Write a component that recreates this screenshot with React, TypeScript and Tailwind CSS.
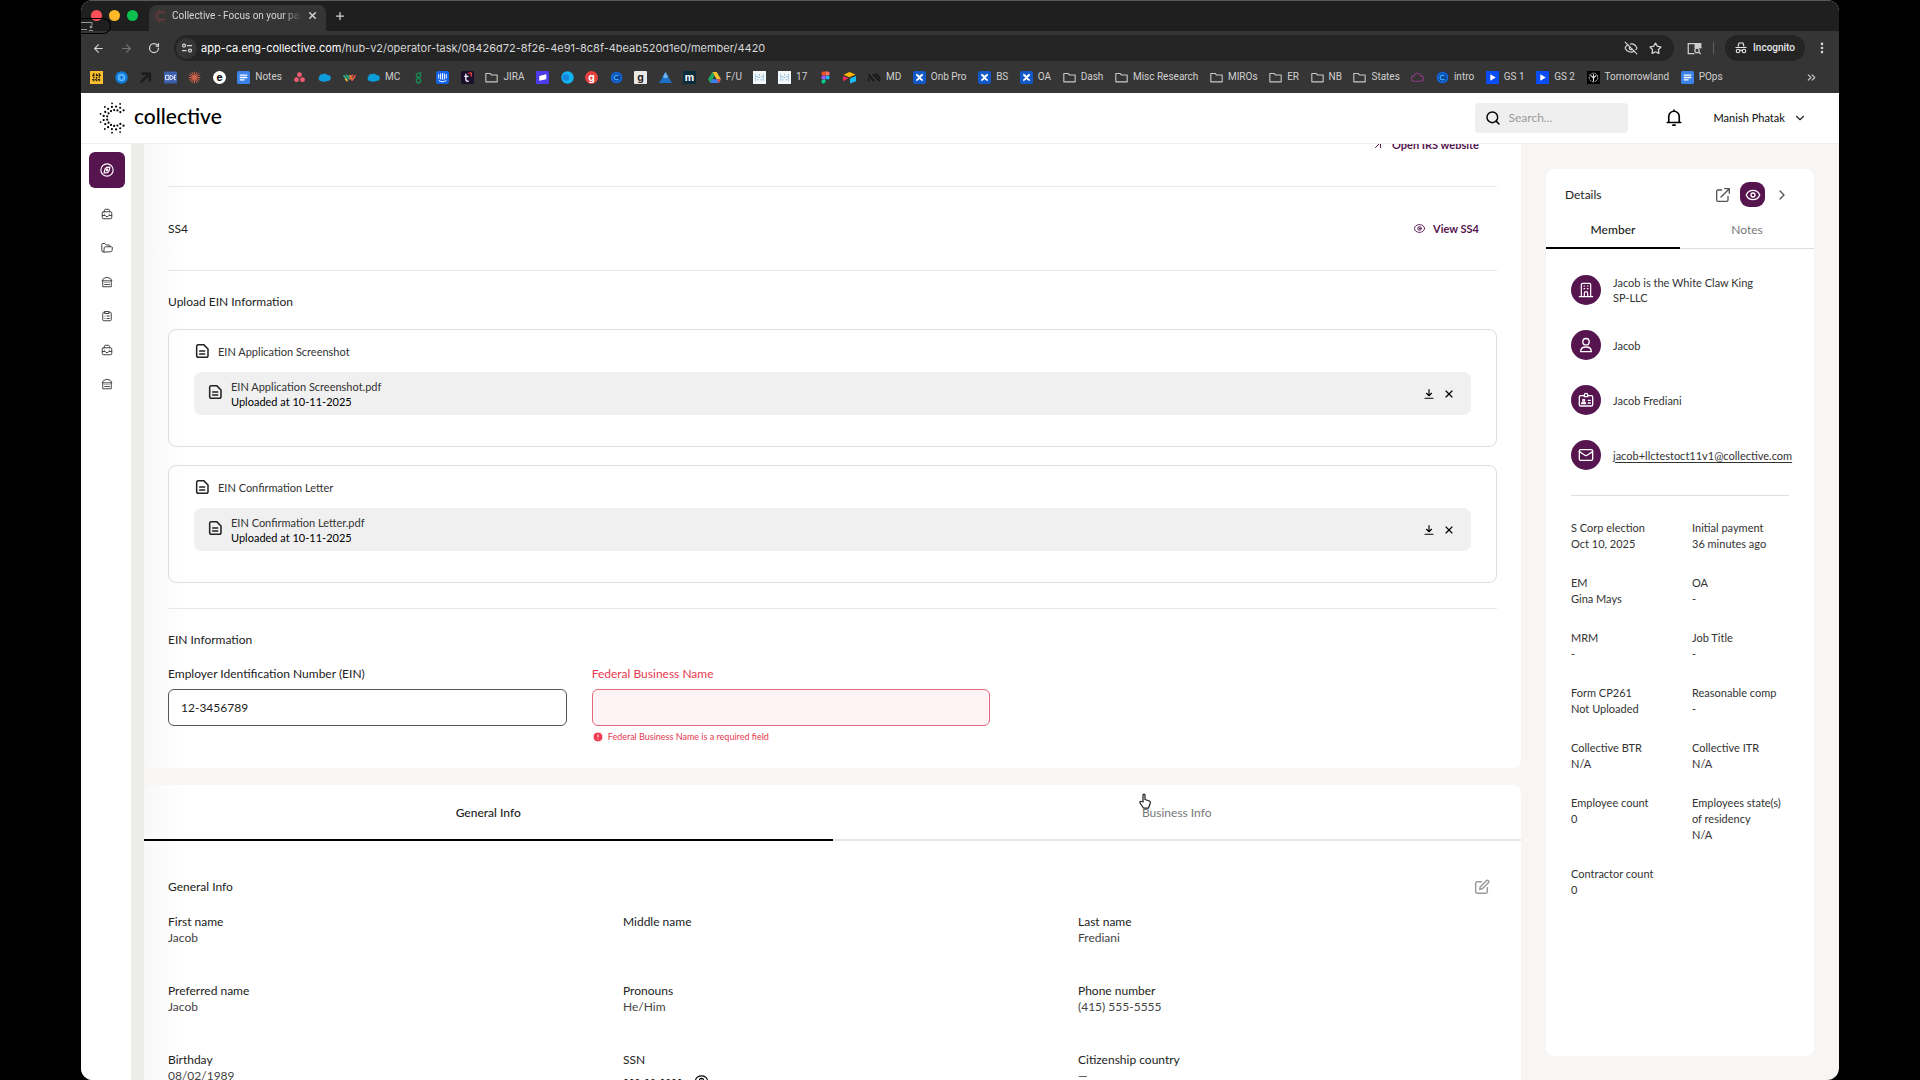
import type { ReactNode } from "react";
import {
  ArrowLeft,
  ArrowRight,
  ArrowUpRight,
  ChevronDown,
  ChevronRight,
  ChevronsRight,
  CircleAlert,
  Eye,
  EyeOff,
  EllipsisVertical,
  Mail,
  Plus,
  RotateCw,
  Search,
  Star,
  X,
} from "lucide-react";

/* ---------- bookmark bar ---------- */

const Ico = ({ children }: { children: ReactNode }) => (
  <svg viewBox="0 0 24 24" className="size-[13px] shrink-0" aria-hidden="true">
    {children}
  </svg>
);

const folder = (
  <Ico>
    <path d="M1.5 4.5h8l2.5 3h10.500v12.500h-21z" fill="none" stroke="#c9c9c9" strokeWidth="2" strokeLinejoin="round" />
  </Ico>
);
const doc = (
  <Ico>
    <rect width="24" height="24" rx="3" fill="#3b82e8" />
    <path d="M5 7.500h14M5 12h14M5 16.500h9" stroke="#fff" strokeWidth="2.400" />
  </Ico>
);
const cloud = (
  <Ico>
    <path d="M6 19a5 5 0 0 1-3.500-8.500A5 5 0 0 1 9 6a5.500 5.500 0 0 1 8 1.500 5 5 0 0 1 6.500 5A5 5 0 0 1 17 18a6 6 0 0 1-6 1.500A6 6 0 0 1 6 19z" fill="#0d9ddb" />
  </Ico>
);
const confluence = (
  <Ico>
    <rect width="24" height="24" rx="4" fill="#1259c9" />
    <path d="M6 7c5 0 7 10 12 10M6 17c5 0 7-10 12-10" fill="none" stroke="#fff" strokeWidth="4" />
  </Ico>
);
const play = (
  <Ico>
    <rect width="24" height="24" fill="#0a4df5" />
    <path d="M8 6l10 6-10 6z" fill="#fff" />
  </Ico>
);
const sheet = (
  <Ico>
    <rect width="24" height="24" fill="#f5f8fa" />
    <path d="M5 6v12M19 6v12M8 9v2M16 9v2M10 12h4M8 16h2M14 16h2M12 6v3" stroke="#6fa9cf" strokeWidth="2" strokeDasharray="2.500 1.200" />
  </Ico>
);
const ringC = (
  <Ico>
    <circle cx="12" cy="12" r="11" fill="#0b3f8f" />
    <circle cx="12" cy="12" r="9" fill="none" stroke="#1672ee" strokeWidth="2.500" />
    <path d="M15.500 9.500a4.300 4.300 0 1 0 0 5" fill="none" stroke="#39a4ff" strokeWidth="2.800" />
  </Ico>
);
const glyph = (bg: string, fg: string, ch: string, r: number) => (
  <Ico>
    <rect width="24" height="24" rx={r} fill={bg} />
    <text x="12" y="18" textAnchor="middle" fontSize="19" fontWeight="700" fill={fg} fontFamily="Inter, sans-serif">
      {ch}
    </text>
  </Ico>
);

const bookmarks: { icon: ReactNode; label?: string; name: string }[] = [
  {
    name: "Grid",
    icon: (
      <Ico>
        <rect width="24" height="24" fill="#fbc02d" />
        <path d="M7 4v16M12 5v14M17 4v16M4 8h5M11 8h9M4 16h8M14 16h6" stroke="#2a2106" strokeWidth="2.400" strokeDasharray="4 1.500" />
      </Ico>
    ),
  },
  {
    name: "Target",
    icon: (
      <Ico>
        <circle cx="12" cy="12" r="11.500" fill="#0d7de0" />
        <circle cx="12" cy="12" r="6" fill="#3aa0f5" stroke="#7cc4ff" strokeWidth="1.800" />
        <circle cx="12" cy="12" r="2" fill="#0b5fc0" />
      </Ico>
    ),
  },
  {
    name: "Arrow",
    icon: (
      <Ico>
        <path d="M5 5h15v14M20 5L3 21" fill="none" stroke="#1b1b1b" strokeWidth="4.500" />
      </Ico>
    ),
  },
  {
    name: "Connector",
    icon: (
      <Ico>
        <rect y="1" width="24" height="22" fill="#3c5fae" />
        <path d="M3 8h6v8H3zM11 8.500h2a3.500 3.500 0 0 1 0 7h-2zM17 12h4M22 8h-3v8h3" fill="none" stroke="#e8eefb" strokeWidth="1.800" />
      </Ico>
    ),
  },
  {
    name: "Burst",
    icon: (
      <Ico>
        <path d="M12 1v22M1 12h22M4 4l16 16M20 4L4 20M7.500 2l9 20M2 7.500l20 9M16.500 2l-9 20M22 7.500l-20 9" stroke="#e0664a" strokeWidth="1.500" />
      </Ico>
    ),
  },
  { name: "E", icon: glyph("#fff", "#111", "e", 12) },
  { name: "Notes", label: "Notes", icon: doc },
  {
    name: "Asana",
    icon: (
      <Ico>
        <circle cx="12" cy="7" r="4.500" fill="#f25c6e" />
        <circle cx="6.500" cy="16" r="4.500" fill="#f25c6e" />
        <circle cx="17.500" cy="16" r="4.500" fill="#f25c6e" />
      </Ico>
    ),
  },
  { name: "Salesforce", icon: cloud },
  {
    name: "Waves",
    icon: (
      <Ico>
        <path d="M1 8l8 9M6 7l7 8" stroke="#2cb58a" strokeWidth="3" />
        <path d="M12 8l6 8M4 14l4 5" stroke="#e9b23c" strokeWidth="3" />
        <path d="M23 8l-7 10M18 7l-6 9" stroke="#ea5545" strokeWidth="3" />
      </Ico>
    ),
  },
  { name: "MC", label: "MC", icon: cloud },
  {
    name: "G",
    icon: (
      <Ico>
        <circle cx="12" cy="8" r="4" fill="none" stroke="#178a57" strokeWidth="2.500" />
        <circle cx="12" cy="18" r="4" fill="none" stroke="#178a57" strokeWidth="2.500" />
        <path d="M14 5l3-3M12 12v2" stroke="#178a57" strokeWidth="2.500" />
      </Ico>
    ),
  },
  {
    name: "Intercom",
    icon: (
      <Ico>
        <rect width="24" height="24" rx="4" fill="#1463e6" />
        <path d="M5 6v8M8.500 4.500v11M12 4v12M15.500 4.500v11M19 6v8M5 17.500c4 3 10 3 14 0" fill="none" stroke="#fff" strokeWidth="1.800" />
      </Ico>
    ),
  },
  {
    name: "T",
    icon: (
      <Ico>
        <rect width="24" height="24" rx="3" fill="#1b0f2c" />
        <path d="M9 5v11a3 3 0 0 0 5 2M6 10h8" fill="none" stroke="#f4eef9" strokeWidth="2.600" />
        <path d="M13 4h6v6" fill="none" stroke="#e5413a" strokeWidth="2.600" />
      </Ico>
    ),
  },
  { name: "JIRA", label: "JIRA", icon: folder },
  {
    name: "Panel",
    icon: (
      <Ico>
        <rect width="24" height="24" rx="2" fill="#4b3bea" />
        <path d="M6 9l13-3v9l-13 3z" fill="#fff" />
      </Ico>
    ),
  },
  {
    name: "Orb",
    icon: (
      <Ico>
        <circle cx="12" cy="12" r="11.500" fill="#12b4f2" />
        <circle cx="9" cy="12" r="6" fill="#1787de" />
      </Ico>
    ),
  },
  { name: "G2", icon: glyph("#e8403d", "#fff", "g", 12) },
  { name: "Ring", icon: ringC },
  { name: "D", icon: glyph("#ece8e6", "#222", "ɡ", 2) },
  {
    name: "Peak",
    icon: (
      <Ico>
        <path d="M12 2l12 20H0z" fill="#1d6fc4" />
        <path d="M12 2l5 9-5 3-5-3z" fill="#67b4f2" />
      </Ico>
    ),
  },
  { name: "M", icon: glyph("#0b2c3c", "#fff", "m", 2) },
  {
    name: "F/U",
    label: "F/U",
    icon: (
      <Ico>
        <path d="M8 2h8l8 13h-8z" fill="#f9c22e" />
        <path d="M8 2l4 7L4 22l-4-7z" fill="#22a565" />
        <path d="M8 15h16l-4 7H4z" fill="#3f80ee" />
        <path d="M20 22l4-7h-8z" fill="#e8453c" />
      </Ico>
    ),
  },
  { name: "Sheet", icon: sheet },
  { name: "17", label: "17", icon: sheet },
  {
    name: "Figma",
    icon: (
      <Ico>
        <path d="M12 1H8a3.700 3.700 0 0 0 0 7.400h4z" fill="#f24e1e" />
        <path d="M12 1h4a3.700 3.700 0 0 1 0 7.400h-4z" fill="#ff7262" />
        <path d="M12 8.400H8a3.700 3.700 0 0 0 0 7.400h4z" fill="#a259ff" />
        <circle cx="16" cy="12" r="3.700" fill="#1abcfe" />
        <path d="M12 15.800H8a3.700 3.700 0 1 0 4 3.700z" fill="#0acf83" />
      </Ico>
    ),
  },
  {
    name: "Airtable",
    icon: (
      <Ico>
        <path d="M1 7l11-5 11 4.500-11 5z" fill="#fcb400" />
        <path d="M13 14l11-5v10l-11 4z" fill="#18bfff" />
        <path d="M0 9l10 4.500L0 19z" fill="#f82b60" />
      </Ico>
    ),
  },
  {
    name: "MD",
    label: "MD",
    icon: (
      <Ico>
        <path d="M1 6l10 13M9 6l13 13M1 13v6M13 6h3l7 9" stroke="#161616" strokeWidth="3" fill="none" />
      </Ico>
    ),
  },
  { name: "Onb Pro", label: "Onb Pro", icon: confluence },
  { name: "BS", label: "BS", icon: confluence },
  { name: "OA", label: "OA", icon: confluence },
  { name: "Dash", label: "Dash", icon: folder },
  { name: "Misc Research", label: "Misc Research", icon: folder },
  { name: "MIROs", label: "MIROs", icon: folder },
  { name: "ER", label: "ER", icon: folder },
  { name: "NB", label: "NB", icon: folder },
  { name: "States", label: "States", icon: folder },
  {
    name: "Cloud",
    icon: (
      <Ico>
        <path d="M6 19a5 5 0 0 1-.5-10 6.500 6.500 0 0 1 12.500 0 5 5 0 0 1 0 10z" fill="none" stroke="#8e3a86" strokeWidth="2" />
      </Ico>
    ),
  },
  { name: "intro", label: "intro", icon: ringC },
  { name: "GS 1", label: "GS 1", icon: play },
  { name: "GS 2", label: "GS 2", icon: play },
  {
    name: "Tomorrowland",
    label: "Tomorrowland",
    icon: (
      <Ico>
        <rect width="24" height="24" fill="#000" />
        <circle cx="12" cy="12" r="8" fill="none" stroke="#cfcfcf" strokeWidth="1.600" strokeDasharray="4 1.500" />
        <path d="M12 6v13M12 13L7 8M12 13l5-5" stroke="#e5e5e5" strokeWidth="2" />
      </Ico>
    ),
  },
  { name: "POps", label: "POps", icon: doc },
];

/* ---------- logo ---------- */

const logoDots: { x: number; y: number; r: number }[] = [];
[
  { radius: 8, from: 48, to: 312, n: 12, r: 1.1 },
  { radius: 11.5, from: 42, to: 318, n: 14, r: 1.1 },
  { radius: 15, from: 70, to: 290, n: 8, r: 0.9 },
].forEach((ring) => {
  for (let i = 0; i < ring.n; i++) {
    const a = ((ring.from + ((ring.to - ring.from) * i) / (ring.n - 1)) * Math.PI) / 180;
    logoDots.push({ x: 16 + ring.radius * Math.cos(a), y: 16 + ring.radius * Math.sin(a), r: ring.r });
  }
});

const LogoMark = ({ className }: { className: string }) => (
  <svg viewBox="0 0 32 32" className={className} fill="currentColor" aria-hidden="true">
    {logoDots.map((d, i) => (
      <circle key={i} cx={d.x} cy={d.y} r={d.r} />
    ))}
  </svg>
);

/* ---------- icons ---------- */

const Line = ({ children, className, w = 2 }: { children: ReactNode; className: string; w?: number }) => (
  <svg
    viewBox="0 0 24 24"
    className={className}
    fill="none"
    stroke="currentColor"
    strokeWidth={w}
    strokeLinecap="round"
    strokeLinejoin="round"
    aria-hidden="true"
  >
    {children}
  </svg>
);

const FileIcon = () => (
  <Line className="size-4" w={2.3}>
    <path d="M6 2.500h8.500L21 9v10a2.500 2.500 0 0 1-2.500 2.500h-12A2.500 2.500 0 0 1 4 19V5a2.500 2.500 0 0 1 2-2.500zM8.500 12h7.500M8.500 16.500h7.500" />
  </Line>
);
const Briefcase = () => (
  <Line className="size-3" w={2}>
    <path d="M4.500 7.500h15a2 2 0 0 1 2 2v10a2 2 0 0 1-2 2h-15a2 2 0 0 1-2-2v-10a2 2 0 0 1 2-2zM7 7.500V5a2.500 2.500 0 0 1 2.500-2.500h5A2.500 2.500 0 0 1 17 5v2.500M2.500 15h6l1.500 2h4l1.500-2h6M7.500 12.500v0M16.500 12.500v0" />
  </Line>
);
const Folders = () => (
  <Line className="size-3" w={2}>
    <path d="M6 19.500H3.500a2 2 0 0 1-2-2V5a2 2 0 0 1 2-2H8l2.500 3H16a2 2 0 0 1 2 2v1.500M5.500 19.500l1-8a2 2 0 0 1 2-2H21a1.800 1.800 0 0 1 1.800 2l-.8 6a2 2 0 0 1-2 2z" />
  </Line>
);
const Bank = () => (
  <Line className="size-3" w={2}>
    <path d="M2.500 9L5 5l7-2.500L19 5l2.500 4zM3.500 9v12.500h17V9M8 13v0M12 13v0M16 13v0M7.500 17h2M11 17h2M15 17h2" />
  </Line>
);
const Clipboard = () => (
  <Line className="size-3" w={2}>
    <path d="M8 4.500H5.500a2 2 0 0 0-2 2v13a2 2 0 0 0 2 2h13a2 2 0 0 0 2-2v-13a2 2 0 0 0-2-2H16M8 3h8v4H8zM8 12v0M12 12h4.500M8 17v0M12 17h4.500" />
  </Line>
);
const EyeRound = ({ className }: { className: string }) => (
  <Line className={className} w={2}>
    <ellipse cx="12" cy="12" rx="11" ry="8.500" />
    <circle cx="12" cy="12" r="4" />
    <circle cx="12" cy="12" r="1" fill="currentColor" />
  </Line>
);
const External = () => (
  <Line className="size-4" w={2}>
    <path d="M10 4.500H4.500a2 2 0 0 0-2 2v13a2 2 0 0 0 2 2h13a2 2 0 0 0 2-2V14M9 15L21.500 2.500M14.500 2.500h7v7" />
  </Line>
);
const Building = () => (
  <Line className="size-4" w={1.8}>
    <path d="M2 22h20M5 22V4a2 2 0 0 1 2-2h10a2 2 0 0 1 2 2v18M9.500 22v-5a2.500 2.500 0 0 1 5 0v5M9 6h1M14 6h1M9 10h1M14 10h1" />
  </Line>
);
const Person = () => (
  <Line className="size-4" w={2}>
    <circle cx="12" cy="7" r="4.800" />
    <path d="M4 22c0-4.500 3-7 8-7s8 2.500 8 7z" />
  </Line>
);
const Badge = () => (
  <Line className="size-4" w={2}>
    <path d="M9 5.500H4a2 2 0 0 0-2 2V19a2 2 0 0 0 2 2h16a2 2 0 0 0 2-2V7.500a2 2 0 0 0-2-2h-5M9.500 7V4.500a2.500 2.500 0 0 1 5 0V7zM5.500 17.500c0-3 6-3 6 0zM15.500 12.500h3M15.500 16.500h3" />
    <circle cx="8.500" cy="12.500" r="1.500" />
  </Line>
);

/* ---------- data ---------- */

const files = [
  { title: "EIN Application Screenshot", file: "EIN Application Screenshot.pdf" },
  { title: "EIN Confirmation Letter", file: "EIN Confirmation Letter.pdf" },
];

const nav = [
  { name: "Operations", icon: <Briefcase /> },
  { name: "Documents", icon: <Folders /> },
  { name: "Banking", icon: <Bank /> },
  { name: "Tasks", icon: <Clipboard /> },
  { name: "Business", icon: <Briefcase /> },
  { name: "Institutions", icon: <Bank /> },
];

const people: { icon: ReactNode; text: ReactNode }[] = [
  {
    icon: <Building />,
    text: (
      <>
        Jacob is the White Claw King
        <br />
        SP-LLC
      </>
    ),
  },
  { icon: <Person />, text: "Jacob" },
  { icon: <Badge />, text: "Jacob Frediani" },
  {
    icon: <Mail className="size-4" strokeWidth={2} />,
    text: (
      <a href="#email" className="underline underline-offset-2">
        jacob+llctestoct11v1@collective.com
      </a>
    ),
  },
];

const facts = [
  ["S Corp election", "Oct 10, 2025"],
  ["Initial payment", "36 minutes ago"],
  ["EM", "Gina Mays"],
  ["OA", "-"],
  ["MRM", "-"],
  ["Job Title", "-"],
  ["Form CP261", "Not Uploaded"],
  ["Reasonable comp", "-"],
  ["Collective BTR", "N/A"],
  ["Collective ITR", "N/A"],
  ["Employee count", "0"],
  ["Employees state(s) of residency", "N/A"],
  ["Contractor count", "0"],
];

const general: [string, ReactNode][] = [
  ["First name", "Jacob"],
  ["Middle name", ""],
  ["Last name", "Frediani"],
  ["Preferred name", "Jacob"],
  ["Pronouns", "He/Him"],
  ["Phone number", "(415) 555-5555"],
  ["Birthday", "08/02/1989"],
  [
    "SSN",
    <span className="flex items-center gap-3 pt-1">
      <span className="text-[10px] text-black">•••-••-••••</span>
      <button aria-label="Show SSN" className="text-black">
        <EyeRound className="size-[13px]" />
      </button>
    </span>,
  ],
  ["Citizenship country", "—"],
];

/* ---------- browser chrome ---------- */

function Chrome() {
  return (
    <div className="relative shrink-0 font-[Roboto,sans-serif] text-[#d6d6d6]">
      <div className="flex h-[31px] items-end border-t border-[#5a5a5a] bg-[#1f1f1f] pl-[10px]">
        <div className="flex h-[31px] items-center gap-[7px] pr-[11px]">
          <span className="size-[11px] rounded-full bg-[#ff4f57]" />
          <span className="size-[11px] rounded-full bg-[#fdb927]" />
          <span className="size-[11px] rounded-full bg-[#0cbf4f]" />
        </div>
        <div className="flex h-[26px] w-[177px] items-center rounded-t-lg bg-[#353535] pr-2 pb-[5px] pl-[5px]">
          <LogoMark className="size-[14px] shrink-0 text-[#d8414f]" />
          <span className="ml-1 w-[130px] overflow-hidden mask-r-from-85% text-[10px] leading-[14px] whitespace-nowrap">
            Collective - Focus on your passion
          </span>
          <button aria-label="Close tab" className="ml-auto">
            <X className="size-[11px]" strokeWidth={3} />
          </button>
        </div>
        <button aria-label="New tab" className="flex h-[26px] w-7 items-center justify-center pb-[5px]">
          <Plus className="size-3" strokeWidth={2.5} />
        </button>
      </div>
      <div className="absolute top-[18px] left-0 flex h-4 w-[30px] items-center rounded-r-full border border-l-0 border-black">
        <svg viewBox="0 0 12 10" className="h-[10px] w-3" fill="none" stroke="#999" aria-hidden="true">
          <path d="M0 1.500h11v3M0 8.500h6" />
          <circle cx="10" cy="6" r="1" fill="#999" />
          <path d="M8 9.500h4" />
        </svg>
      </div>

      <div className="flex h-[34px] items-center bg-[#353535] pr-[10px] pl-[11px]">
        <div className="flex w-[82px] items-center gap-[15px]">
          <button aria-label="Back"><ArrowLeft className="size-[13px]" /></button>
          <button aria-label="Forward" className="text-[#777]"><ArrowRight className="size-[13px]" /></button>
          <button aria-label="Reload"><RotateCw className="size-3" strokeWidth={2.5} /></button>
        </div>
        <div className="flex h-[26px] grow items-center rounded-full bg-[#242424] pr-3 pl-[2px]">
          <span className="flex size-[21px] items-center justify-center rounded-full bg-[#353535]">
            <svg viewBox="0 0 24 24" className="size-3" fill="none" stroke="#d6d6d6" strokeWidth="2.500" aria-hidden="true">
              <circle cx="6" cy="7" r="3" />
              <path d="M12 7h10M2 17h9" />
              <circle cx="18" cy="17" r="3" />
            </svg>
          </span>
          <div className="ml-1 grow font-[Inter,sans-serif] text-[11px] whitespace-nowrap">
            <span className="text-white">app-ca.eng-collective.com</span>
            /hub-v2/operator-task/08426d72-8f26-4e91-8c8f-4beab520d1e0/member/4420
          </div>
          <div className="flex items-center gap-[11px]">
            <EyeOff className="size-[14px]" />
            <button aria-label="Bookmark"><Star className="size-[13px]" strokeWidth={2.3} /></button>
          </div>
        </div>
        <svg viewBox="0 0 24 24" className="ml-[13px] size-[15px]" fill="none" stroke="#cfcfcf" strokeWidth="2" aria-hidden="true">
          <path d="M12 20H2V4h12M22 10v2" />
          <path d="M13 4h9v6h-9z" fill="#cfcfcf" />
          <circle cx="16" cy="15" r="3.500" />
          <path d="M19 18l3 3" />
        </svg>
        <span className="mx-[11px] h-3 w-px bg-[#5e5e5e]" />
        <button className="flex h-[26px] w-20 items-center justify-center gap-[6px] rounded-full bg-[#242424] text-[10px] font-medium text-[#e6e6e6]">
          <svg viewBox="0 0 24 24" className="size-3" fill="none" stroke="currentColor" strokeWidth="2.300" aria-hidden="true">
            <path d="M6 9l2-7h8l2 7M1 11h22" />
            <circle cx="6" cy="18" r="3.500" />
            <circle cx="18" cy="18" r="3.500" />
            <path d="M9.500 17c1.500-1 3.500-1 5 0" />
          </svg>
          Incognito
        </button>
        <button aria-label="Browser menu" className="ml-[10px]">
          <EllipsisVertical className="size-[14px]" strokeWidth={2.5} />
        </button>
      </div>

      <nav aria-label="Bookmarks" className="flex h-7 items-start bg-[#353535] pr-[21px] pl-[9px] text-[10px] leading-6 text-[#d0d0d0]">
        <div className="flex grow justify-between">
          {bookmarks.map((b) => (
            <a key={b.name} href="#bookmark" aria-label={b.name} className="flex h-6 items-center gap-[5px] whitespace-nowrap">
              {b.icon}
              {b.label}
            </a>
          ))}
        </div>
        <button aria-label="More bookmarks" className="ml-[82px] flex h-6 items-center">
          <ChevronsRight className="size-[13px]" />
        </button>
      </nav>
    </div>
  );
}

/* ---------- page ---------- */

function TopBar() {
  return (
    <header className="flex h-[51px] shrink-0 items-center border-b border-[#efefef] bg-white pl-[18px]">
      <a href="#home" className="flex items-center gap-[3px] text-black">
        <LogoMark className="size-8" />
        <span className="pb-1 text-[21px] leading-6 font-medium">collective</span>
      </a>
      <label className="ml-auto flex h-[30px] w-[153px] items-center gap-2 rounded bg-[#efefef] pl-[10px]">
        <Search className="size-4 shrink-0 text-black" strokeWidth={2.2} />
        <input aria-label="Search" placeholder="Search..." className="w-full bg-transparent text-[12px] outline-none placeholder:text-[#9b9b9b]" />
      </label>
      <button aria-label="Notifications" className="ml-[37px]">
        <Line className="size-[18px] text-black" w={2.2}>
          <path d="M5 18V10a7 7 0 0 1 14 0v8M3 18h18M12 1.500v1.500M10.500 21.500h3" />
        </Line>
      </button>
      <button className="mr-8 ml-[31px] flex items-center gap-2 text-[11px] font-medium text-[#222]">
        Manish Phatak
        <ChevronDown className="size-[14px]" strokeWidth={2} />
      </button>
    </header>
  );
}

function SideNav() {
  return (
    <nav aria-label="Main" className="flex w-[50px] shrink-0 flex-col items-center bg-white pt-2 pl-[2px] text-[#444]">
      <button aria-label="Dashboard" className="flex size-9 items-center justify-center rounded-md bg-[#571550] text-white">
        <Line className="size-[14px]" w={2}>
          <circle cx="12" cy="12" r="10.500" />
          <path d="M17 7l-1.500 6.500-2.500 3-6 .5 1.500-6.500 2.500-3z" />
          <circle cx="12" cy="12" r="1.500" />
        </Line>
      </button>
      <div className="mt-5 flex flex-col gap-[22px]">
        {nav.map((n) => (
          <button key={n.name} aria-label={n.name} className="block">
            {n.icon}
          </button>
        ))}
      </div>
    </nav>
  );
}

function EinCard() {
  return (
    <section className="rounded-b-lg bg-[linear-gradient(to_right,#f8f8f8,#ffffff_40px)] px-6 pb-[25px]">
      <div className="-mt-[7px] flex h-[49px] items-start justify-end pr-[18px]">
        <a href="#irs" className="flex items-center gap-2 text-[11px] leading-4 font-bold text-[#571550]">
          <ArrowUpRight className="size-3" strokeWidth={2} />
          Open IRS website
        </a>
      </div>
      <div className="flex h-[85px] items-center justify-between border-y border-[#e8e8e8] pr-[18px]">
        <h2>SS4</h2>
        <button className="flex items-center gap-2 text-[11px] font-bold text-[#571550]">
          <EyeRound className="size-[11px]" />
          View SS4
        </button>
      </div>
      <h2 className="mt-[23px]">Upload EIN Information</h2>
      <div className="mt-[19px] flex flex-col gap-[18px] border-b border-[#e8e8e8] pb-[25px]">
        {files.map((f) => (
          <div key={f.title} className="rounded-lg border border-[#dedede] px-[25px] pt-[14px] pb-[31px] text-[11px] leading-[15px]">
            <div className="flex h-[14px] items-center gap-2">
              <FileIcon />
              <h3 className="text-[#333]">{f.title}</h3>
            </div>
            <div className="mt-[14px] flex h-[43px] items-center rounded-lg bg-[#f0f0f0] pr-4 pl-[13px]">
              <span className="pb-1">
                <FileIcon />
              </span>
              <div className="ml-2">
                <p className="text-[#333]">{f.file}</p>
                <p className="text-black">Uploaded at 10-11-2025</p>
              </div>
              <button aria-label={"Download " + f.file} className="ml-auto">
                <Line className="size-3 text-black" w={2.3}>
                  <path d="M12 3v12M7 10.500l5 5 5-5M4 20.500h16" />
                </Line>
              </button>
              <button aria-label={"Remove " + f.file} className="ml-2">
                <X className="size-3 text-black" strokeWidth={2.3} />
              </button>
            </div>
          </div>
        ))}
      </div>
      <h2 className="mt-[23px]">EIN Information</h2>
      <div className="mt-[18px] flex items-start gap-[25px]">
        <div className="w-[30%]">
          <label htmlFor="ein" className="block">Employer Identification Number (EIN)</label>
          <input id="ein" defaultValue="12-3456789" className="mt-[7px] block h-[37px] w-full rounded-md border border-[#555] bg-white px-3 outline-none" />
        </div>
        <div className="w-[30%] text-[#e8384f]">
          <label htmlFor="fbn" className="block">Federal Business Name</label>
          <input id="fbn" aria-invalid="true" aria-describedby="fbn-error" className="mt-[7px] block h-[37px] w-full rounded-md border border-[#e56a7b] bg-[#fef4f6] px-3 outline-none" />
          <p id="fbn-error" className="mt-1 flex items-center gap-1 text-[9px] leading-[13px]">
            <CircleAlert className="size-3 fill-[#f03a4f] stroke-white" />
            Federal Business Name is a required field
          </p>
        </div>
      </div>
    </section>
  );
}

function InfoCard() {
  return (
    <section className="mt-[17px] grow rounded-t-lg bg-[linear-gradient(to_right,#f8f8f8,#ffffff_40px)]">
      <div role="tablist" className="grid h-14 grid-cols-2">
        <button role="tab" aria-selected="true" className="border-b-2 border-black pt-[2px] font-medium">General Info</button>
        <button role="tab" aria-selected="false" className="border-b-2 border-[#e8e8e8] pt-[2px] text-[#777]">Business Info</button>
      </div>
      <div className="px-6 pt-[37px]">
        <div className="flex h-[18px] items-center justify-between pr-[7px]">
          <h2>General Info</h2>
          <button aria-label="Edit general info" className="text-[#999]">
            <Line className="size-4" w={2.2}>
              <path d="M11 4H5a2.500 2.500 0 0 0-2.500 2.500v12.500A2.500 2.500 0 0 0 5 21.500h12.500A2.500 2.500 0 0 0 20 19v-6M18.500 2.500a2 2 0 0 1 3 3L12.500 14.500 8.500 15.500l1-4z" />
            </Line>
          </button>
        </div>
        <dl className="mt-[18px] grid grid-cols-3 gap-x-9 gap-y-[37px]">
          {general.map(([k, v]) => (
            <div key={k} className="h-8">
              <dt>{k}</dt>
              <dd className="text-[#444]">{v}</dd>
            </div>
          ))}
        </dl>
      </div>
    </section>
  );
}

function Details() {
  return (
    <aside className="mt-[25px] mr-[25px] mb-6 w-[268px] shrink-0 rounded-lg bg-white">
      <div className="flex h-[51px] items-center pr-6 pl-[19px]">
        <h2>Details</h2>
        <div className="ml-auto flex items-center gap-[9px] text-[#555]">
          <button aria-label="Open in new window"><External /></button>
          <button aria-label="Preview" className="flex size-[25px] items-center justify-center rounded-[9px] bg-[#571550] text-white">
            <Eye className="size-4" />
          </button>
          <button aria-label="Collapse"><ChevronRight className="size-4" strokeWidth={2} /></button>
        </div>
      </div>
      <div role="tablist" className="grid h-[29px] grid-cols-2">
        <button role="tab" aria-selected="true" className="border-b-2 border-black pb-2 font-medium">Member</button>
        <button role="tab" aria-selected="false" className="border-b border-[#dedede] pb-2 text-[#777]">Notes</button>
      </div>
      <div className="px-[25px] pt-[26px] text-[11px] leading-[15px] text-[#333]">
        <ul className="flex flex-col gap-[25px] border-b border-[#dedede] pb-[25px]">
          {people.map((p, i) => (
            <li key={i} className="flex items-center gap-3 whitespace-nowrap">
              <span className="flex size-[30px] shrink-0 items-center justify-center rounded-full bg-[#571550] text-white">{p.icon}</span>
              <span>{p.text}</span>
            </li>
          ))}
        </ul>
        <dl className="mt-6 grid grid-cols-2 gap-x-6 gap-y-[23px] leading-4">
          {facts.map(([k, v]) => (
            <div key={k}>
              <dt>{k}</dt>
              <dd>{v}</dd>
            </div>
          ))}
        </dl>
      </div>
    </aside>
  );
}

export default function App() {
  return (
    <div className="h-screen bg-black px-[81px]">
      <div className="relative flex h-full flex-col overflow-hidden rounded-xl bg-[#f7f6f5] font-[Lato,sans-serif] text-[12px] leading-4 text-[#222]">
        <Chrome />
        <TopBar />
        <div className="flex min-h-0 grow">
          <SideNav />
          <div className="w-[13px] shrink-0 bg-[#ecede8]" />
          <main className="flex min-w-0 grow flex-col overflow-hidden">
            <EinCard />
            <InfoCard />
          </main>
          <div className="w-[25px] shrink-0" />
          <Details />
        </div>
        <svg viewBox="0 0 24 32" className="absolute top-[793px] left-[1058px] h-4 w-3" fill="#fff" stroke="#222" strokeWidth="2.500" strokeLinejoin="round" aria-hidden="true">
          <path d="M8 18V4a2 2 0 0 1 4 0v9l9 3c2 1 2 3 1 6l-3 8H9L2 20c-1-2 1-4 3-3z" />
        </svg>
      </div>
    </div>
  );
}
